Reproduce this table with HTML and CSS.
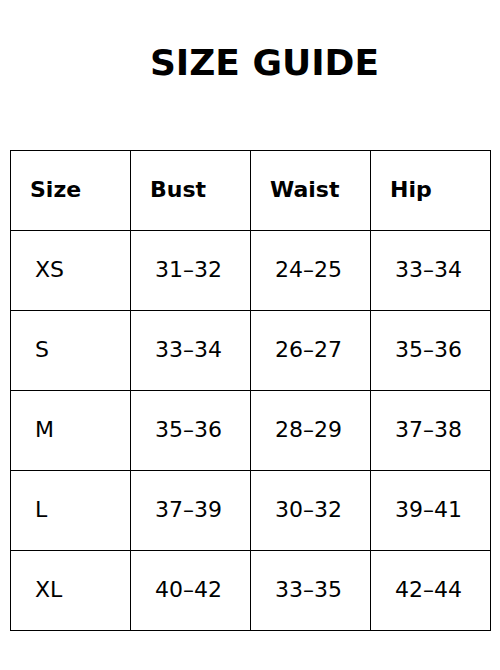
FILE: index.html
```html
<!DOCTYPE html>
<html lang="en">
<head>
<meta charset="utf-8">
<title>Size Guide</title>
<link rel="stylesheet" href="styles.css">
</head>
<body>
<div class="page">
  <h1 class="title">SIZE GUIDE</h1>
  <div class="grid" role="table">
    <div class="cell head">Size</div><div class="cell head">Bust</div><div class="cell head">Waist</div><div class="cell head">Hip</div>
    <div class="cell">XS</div><div class="cell">31–32</div><div class="cell">24–25</div><div class="cell">33–34</div>
    <div class="cell">S</div><div class="cell">33–34</div><div class="cell">26–27</div><div class="cell">35–36</div>
    <div class="cell">M</div><div class="cell">35–36</div><div class="cell">28–29</div><div class="cell">37–38</div>
    <div class="cell">L</div><div class="cell">37–39</div><div class="cell">30–32</div><div class="cell">39–41</div>
    <div class="cell">XL</div><div class="cell">40–42</div><div class="cell">33–35</div><div class="cell">42–44</div>
  </div>
</div>
</body>
</html>
```
FILE: styles.css
```css
html, body {
  margin: 0;
  padding: 0;
  background: #ffffff;
}
.page {
  padding: 0 10px;
  font-family: "DejaVu Sans", sans-serif;
  color: #000000;
}
.title {
  margin: 42px 0 66px 0;
  height: 42px;
  line-height: 42px;
  font-size: 36px;
  font-weight: bold;
  text-align: center;
  padding-left: 29px;
}
.grid {
  display: grid;
  grid-template-columns: repeat(4, 120px);
  grid-auto-rows: 80px;
  width: 481px;
  box-sizing: border-box;
  border-left: 1px solid #000;
  border-top: 1px solid #000;
}
.cell {
  box-sizing: border-box;
  border-right: 1px solid #000;
  border-bottom: 1px solid #000;
  display: flex;
  align-items: center;
  padding-left: 24px;
  padding-bottom: 3px;
  font-size: 22px;
}
.head {
  font-weight: bold;
  padding-left: 19px;
}
```
